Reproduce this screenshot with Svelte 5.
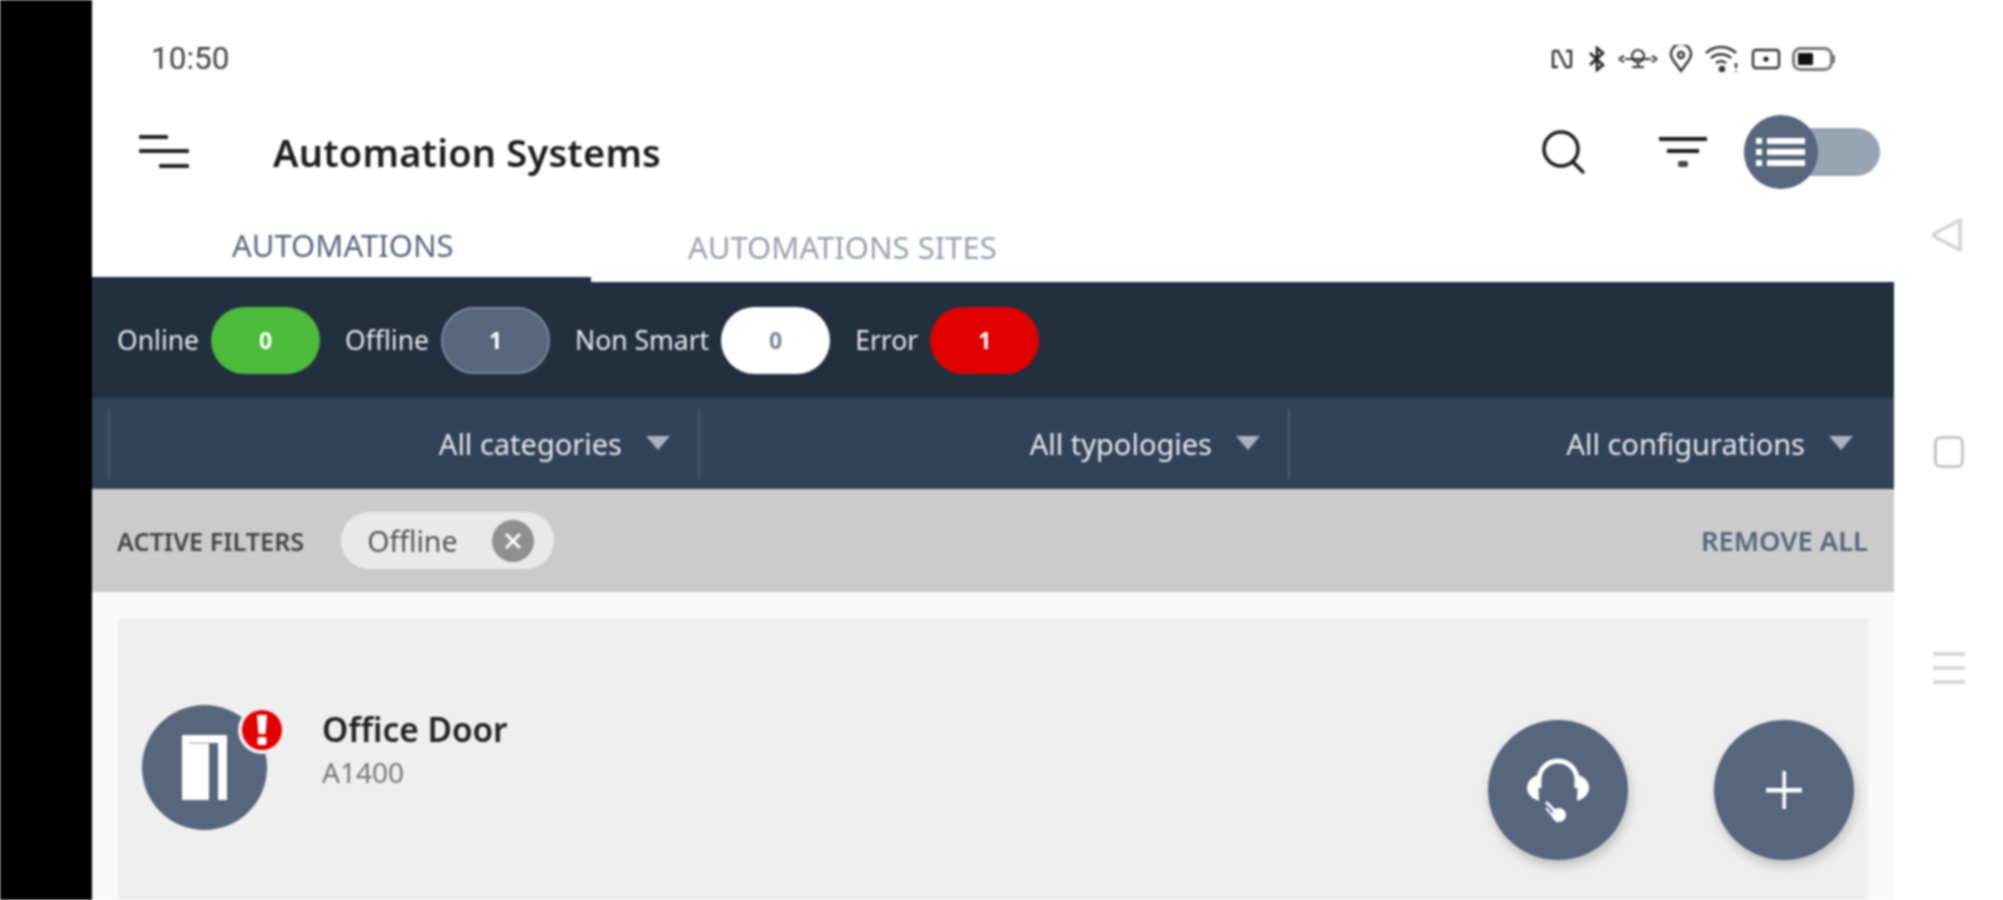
<script>
  const stats = [
    { label: 'Online', value: 0, kind: 'green' },
    { label: 'Offline', value: 1, kind: 'slate' },
    { label: 'Non Smart', value: 0, kind: 'white' },
    { label: 'Error', value: 1, kind: 'red' }
  ];
  const filters = ['All categories', 'All typologies', 'All configurations'];
</script>

<div class="screen">
  <div class="bezel"></div>

  <main class="app">
    <div class="status">
      <span class="time">10:50</span>
      <div class="status-icons">
        <svg class="nfc" width="22" height="24" viewBox="0 0 22 24" fill="none" stroke="#333" stroke-width="2.4"><path d="M2 4h5l8 16h5M20 20V4h-5M2 4v16h5"/></svg>
        <svg width="20" height="26" viewBox="0 0 20 26" fill="none" stroke="#222" stroke-width="2.6"><path d="M3 7l13 12-6 5V2l6 5L3 19"/></svg>
        <svg width="40" height="24" viewBox="0 0 40 24" fill="none" stroke="#333" stroke-width="2.2"><path d="M1 12l5-3M1 12l5 3M39 12l-5-3M39 12l-5 3M7 12h26"/><circle cx="20" cy="9" r="6"/><path d="M14 20h12M20 15v5"/></svg>
        <svg width="24" height="28" viewBox="0 0 24 28" fill="none" stroke="#333" stroke-width="2.4"><path d="M12 26L4 15a10 10 0 1 1 16 0z"/><circle cx="12" cy="10" r="3"/></svg>
        <svg width="36" height="28" viewBox="0 0 36 28" fill="none" stroke="#333" stroke-width="2.4"><path d="M2 8c9-8 21-8 30 0M7 13c6-5 14-5 20 0M12 18c3-2 7-2 10 0"/><circle cx="18" cy="24" r="2" fill="#333"/><path d="M32 18v5M32 26v1"/></svg>
        <svg width="30" height="24" viewBox="0 0 30 24" fill="none" stroke="#333" stroke-width="2.4"><rect x="2" y="3" width="26" height="18" rx="3"/><circle cx="15" cy="12" r="2.6" fill="#222" stroke="none"/></svg>
        <svg width="44" height="26" viewBox="0 0 44 26"><rect x="1.5" y="2.5" width="38" height="21" rx="7" fill="#fff" stroke="#777" stroke-width="3"/><rect x="6" y="7" width="15" height="12" rx="1" fill="#111"/><rect x="41" y="9" width="2" height="8" fill="#777"/></svg>
      </div>
    </div>

    <header class="header">
      <svg class="menu" width="52" height="38" viewBox="0 0 52 38" fill="#222">
        <rect x="1" y="2" width="29" height="4" rx="1"/>
        <rect x="1" y="16" width="50" height="4" rx="1"/>
        <rect x="21" y="31" width="30" height="4" rx="1"/>
      </svg>
      <h1>Automation Systems</h1>
      <div class="actions">
        <svg class="search" width="46" height="46" viewBox="0 0 46 46" fill="none" stroke="#1d1d1d" stroke-width="3.5"><circle cx="21" cy="20" r="17"/><path d="M33 33l10 10" stroke-linecap="round"/></svg>
        <svg class="funnel" width="50" height="36" viewBox="0 0 50 36" fill="#1d1d1d">
          <rect x="1" y="3" width="48" height="4"/>
          <rect x="9" y="15" width="32" height="4"/>
          <rect x="20" y="27" width="10" height="6" rx="2" fill="#444"/>
        </svg>
        <div class="toggle">
          <div class="knob">
            <svg width="50" height="32" viewBox="0 0 50 32" fill="#fff">
              <rect x="0" y="2" width="6" height="6"/><rect x="11" y="2" width="38" height="6"/>
              <rect x="0" y="13" width="6" height="6"/><rect x="11" y="13" width="38" height="6"/>
              <rect x="0" y="24" width="6" height="6"/><rect x="11" y="24" width="38" height="6"/>
            </svg>
          </div>
        </div>
      </div>
    </header>

    <nav class="tabs">
      <div class="tab active">AUTOMATIONS</div>
      <div class="tab">AUTOMATIONS SITES</div>
    </nav>

    <section class="stats">
      {#each stats as s}
        <span class="stat-label">{s.label}</span>
        <span class="pill {s.kind}">{s.value}</span>
      {/each}
    </section>

    <section class="filters">
      {#each filters as f}
        <div class="filter">
          <span>{f}</span>
          <i class="caret"></i>
        </div>
      {/each}
    </section>

    <section class="active-filters">
      <span class="af-title">ACTIVE FILTERS</span>
      <span class="chip">
        <span>Offline</span>
        <span class="chip-x">
          <svg width="20" height="20" viewBox="0 0 20 20" stroke="#fff" stroke-width="3"><path d="M3 3l14 14M17 3L3 17"/></svg>
        </span>
      </span>
      <span class="remove">REMOVE ALL</span>
    </section>

    <div class="list">
      <article class="card">
        <div class="avatar">
          <svg width="45" height="65" viewBox="0 0 45 65">
            <path d="M0 0h45v65H0z" fill="#fff"/>
            <path d="M27 8h9v57h-9z" fill="#56667d"/>
            <path d="M7 7h20v2H7z" fill="#c4cad3"/>
          </svg>
          <span class="badge">
            <svg width="14" height="30" viewBox="0 0 14 30" fill="#fff"><path d="M2 0h10l-1.500 19h-7z"/><rect x="2.500" y="22" width="9" height="8" rx="2"/></svg>
          </span>
        </div>
        <div class="info">
          <div class="name">Office Door</div>
          <div class="code">A1400</div>
        </div>
        <button class="fab first" aria-label="Support">
          <svg width="64" height="68" viewBox="0 0 64 68" fill="none">
            <path d="M13 32V24a19 19 0 0 1 38 0v8" stroke="#fff" stroke-width="5"/>
            <path d="M12 19c-7 2-11 7-11 13s5 11 12 13z" fill="#fff"/>
            <path d="M52 19c7 2 11 7 11 13s-5 11-12 13z" fill="#fff"/>
            <path d="M20 46l10 10" stroke="#fff" stroke-width="3"/>
            <circle cx="33" cy="59" r="7" fill="#fff"/>
            <path d="M20 52l12 14" stroke="#fff" stroke-width="2"/>
          </svg>
        </button>
        <button class="fab second" aria-label="Add">
          <svg width="36" height="38" viewBox="0 0 36 38" fill="#fff"><rect x="16.500" y="0" width="3.500" height="38"/><rect x="0" y="17" width="36" height="4.500"/></svg>
        </button>
      </article>
    </div>
  </main>

  <aside class="softkeys">
    <svg width="34" height="36" viewBox="3 0 34 36" fill="none" stroke="#d4d4d4" stroke-width="3.500"><path d="M31 3L3 18l28 15z" stroke-linejoin="round"/></svg>
    <svg width="30" height="32" viewBox="0 0 30 32" fill="none" stroke="#c6c6c6" stroke-width="3"><rect x="1.500" y="1.500" width="27" height="29" rx="5"/></svg>
    <svg width="32" height="34" viewBox="0 0 32 34" fill="#d8d8d8"><rect y="1" width="32" height="4"/><rect y="15" width="32" height="4"/><rect y="29" width="32" height="4"/></svg>
  </aside>
</div>

<style>
  :global(body) {
    margin: 0;
    background: #fff;
  }
  .screen {
    display: flex;
    width: 2003px;
    height: 900px;
    overflow: hidden;
    background: #fff;
    font-family: "Noto Sans", "Open Sans", sans-serif;
    filter: blur(0.8px);
  }
  .bezel {
    flex: 0 0 92px;
    background: #000;
  }
  .app {
    flex: 0 0 1802px;
    display: flex;
    flex-direction: column;
  }
  .status {
    height: 110px;
    box-sizing: border-box;
    padding: 41px 58px 0 59px;
    display: flex;
    justify-content: space-between;
    align-items: flex-start;
  }
  .time {
    font-family: Roboto, sans-serif;
    font-size: 31.5px;
    line-height: 35px;
    color: #444;
  }
  .status-icons {
    display: flex;
    align-items: center;
    gap: 11px;
    height: 35px;
  }
  .nfc {
    margin-right: 3px;
  }
  .header {
    height: 84px;
    display: flex;
    align-items: center;
    padding: 0 14px 0 46px;
  }
  h1 {
    margin: 0 0 0 83px;
    font-size: 38px;
    font-weight: 600;
    letter-spacing: 0.2px;
    color: #1d1d1d;
    white-space: nowrap;
  }
  .actions {
    margin-left: auto;
    display: flex;
    align-items: center;
  }
  .funnel {
    margin-left: 72px;
  }
  .toggle {
    margin-left: 36px;
    width: 136px;
    height: 48px;
    border-radius: 24px;
    background: #98a3b4;
    display: flex;
    align-items: center;
  }
  .knob {
    width: 74px;
    height: 74px;
    border-radius: 50%;
    background: #56667d;
    display: flex;
    align-items: center;
    justify-content: center;
    flex: none;
  }
  .tabs {
    height: 88px;
    display: flex;
    box-sizing: border-box;
  }
  .tab {
    font-size: 31px;
    color: #98a2b0;
    box-sizing: border-box;
    display: flex;
    align-items: center;
    padding: 18px 0 0 97px;
    white-space: nowrap;
  }
  .tab.active {
    width: 499px;
    color: #56667d;
    padding-left: 140px;
    padding-top: 18px;
    border-bottom: 5px solid #1c3048;
  }
  .stats {
    height: 116px;
    background: #222f3f;
    display: flex;
    align-items: center;
    padding-left: 25px;
  }
  .stat-label {
    color: #e6e9ee;
    font-size: 26.5px;
    margin-right: 12px;
    white-space: nowrap;
  }
  .pill {
    width: 109px;
    height: 67px;
    border-radius: 34px;
    display: flex;
    align-items: center;
    justify-content: center;
    font-size: 23px;
    font-weight: 700;
    margin-right: 25px;
    box-sizing: border-box;
  }
  .green { background: #4cbb3c; color: #fff; }
  .slate { background: #56667d; color: #fff; border: 2px solid #7c8899; }
  .white { background: #fff; color: #7a8696; }
  .red { background: #e00000; color: #fff; }
  .filters {
    height: 91px;
    background: #314358;
    display: flex;
    align-items: center;
    padding: 0 0 0 16px;
  }
  .filter {
    height: 70px;
    flex: 0 0 590px;
    box-sizing: border-box;
    border-left: 2px solid #465a70;
    display: flex;
    align-items: center;
    justify-content: flex-end;
    gap: 24px;
    padding-right: 28px;
    color: #e6e9ee;
    font-size: 29px;
    white-space: nowrap;
  }
  .filter:last-child {
    flex: 0 0 604px;
    padding-right: 39px;
  }
  .caret {
    width: 0;
    height: 0;
    border-left: 12px solid transparent;
    border-right: 12px solid transparent;
    border-top: 14px solid #a9b3c0;
    margin-top: -2px;
  }
  .active-filters {
    height: 103px;
    background: #cbcbcb;
    display: flex;
    align-items: center;
    padding: 0 26px 0 25px;
  }
  .af-title {
    font-size: 25.2px;
    font-weight: 600;
    color: #444;
    white-space: nowrap;
  }
  .chip {
    margin-left: 37px;
    width: 213px;
    height: 57px;
    border-radius: 29px;
    background: #e9e9e9;
    box-sizing: border-box;
    padding: 0 20px 0 26px;
    display: flex;
    align-items: center;
    justify-content: space-between;
    font-size: 28.5px;
    color: #555;
  }
  .chip-x {
    width: 42px;
    height: 42px;
    border-radius: 50%;
    background: #8f8f8f;
    display: flex;
    align-items: center;
    justify-content: center;
  }
  .remove {
    margin-left: auto;
    font-size: 27.3px;
    font-weight: 600;
    color: #56667d;
    white-space: nowrap;
  }
  .list {
    flex: 1;
    background: #fafafa;
    padding: 26px 26px 0;
    min-height: 0;
  }
  .card {
    position: relative;
    height: 100%;
    background: #efefef;
    box-sizing: border-box;
    padding: 87px 0 0 24px;
    display: flex;
    align-items: flex-start;
  }
  .avatar {
    position: relative;
    width: 125px;
    height: 125px;
    border-radius: 50%;
    background: #56667d;
    display: flex;
    align-items: center;
    justify-content: center;
    flex: none;
  }
  .badge {
    position: absolute;
    left: 100px;
    top: 5px;
    width: 40px;
    height: 40px;
    border-radius: 50%;
    background: #e00000;
    box-shadow: 0 0 0 4px #efefef;
    display: flex;
    align-items: center;
    justify-content: center;
  }
  .info {
    margin-left: 55px;
    padding-top: 2px;
  }
  .name {
    font-size: 33.4px;
    line-height: 44px;
    font-weight: 600;
    color: #222;
    white-space: nowrap;
  }
  .code {
    font-size: 28px;
    line-height: 34px;
    margin-top: 4px;
    color: #777;
  }
  .fab {
    position: absolute;
    top: 102px;
    width: 140px;
    height: 140px;
    border: 0;
    padding: 0;
    border-radius: 50%;
    background: #56667d;
    box-shadow: 2px 6px 12px rgba(0, 0, 0, 0.2);
    display: flex;
    align-items: center;
    justify-content: center;
  }
  .fab.first { left: 1370px; }
  .fab.second { left: 1596px; }
  .softkeys {
    flex: 1;
    position: relative;
    display: flex;
    flex-direction: column;
    align-items: center;
    padding-top: 217px;
    gap: 183px;
  }
</style>
